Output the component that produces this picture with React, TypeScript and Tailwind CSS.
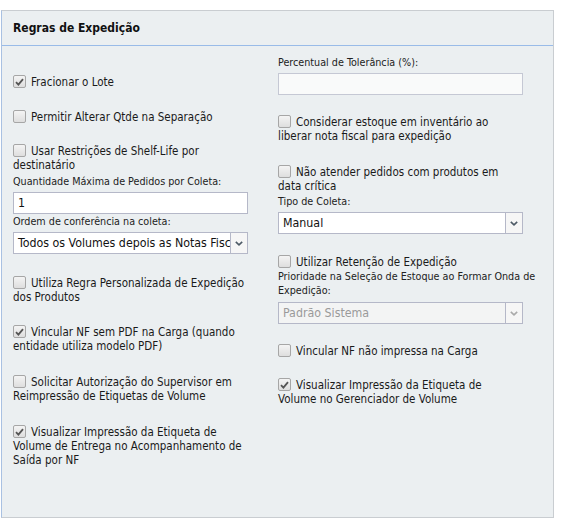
import React from "react";

const font = { fontFamily: '"DejaVu Sans Condensed", "DejaVu Sans", sans-serif' };

function Box({ checked }: { checked?: boolean }) {
  return (
    <span className="absolute left-0 top-0 w-[13px] h-[13px] rounded-[2px] border border-[#a6a6a6] bg-gradient-to-b from-[#f4f4f4] to-[#dedede] flex items-center justify-center">
      {checked && (
        <svg width="9" height="8" viewBox="0 0 9 8">
          <path d="M1 4.2 L3.4 6.6 L8 1.2" stroke="#555" strokeWidth="1.8" fill="none" />
        </svg>
      )}
    </span>
  );
}

function Check({ checked, lines, className }: { checked?: boolean; lines: string[]; className?: string }) {
  return (
    <div className={"relative text-[11.5px] leading-[14px] text-[#1a1a1a] whitespace-nowrap " + (className || "")}>
      <Box checked={checked} />
      {lines.map((l, i) => (
        <div key={i} className={i === 0 ? "pl-[18px]" : ""}>{l}</div>
      ))}
    </div>
  );
}

function Label({ children, className }: { children: React.ReactNode; className?: string }) {
  return <div className={"text-[10.7px] leading-[14px] text-[#222] whitespace-nowrap " + (className || "")}>{children}</div>;
}

function Select({ value, disabled, className }: { value: string; disabled?: boolean; className?: string }) {
  return (
    <div className={"flex h-[22px] border border-[#b5b8c8] " + (disabled ? "bg-[#f3f4f4] text-[#9a9a9a]" : "bg-white text-[#111]") + " " + (className || "")}>
      <div className="flex-1 overflow-hidden whitespace-nowrap text-[12.3px] leading-[20px] pl-[4px]">{value}</div>
      <div className="w-[17px] border-l border-[#b5b8c8] flex items-center justify-center bg-[#f6f6f6]">
        <svg width="8" height="5" viewBox="0 0 8 5">
          <path d="M0.8 0.8 L4 3.8 L7.2 0.8" stroke={disabled ? "#aaa" : "#4d5a66"} strokeWidth="1.6" fill="none" />
        </svg>
      </div>
    </div>
  );
}

export default function App() {
  return (
    <div className="w-[564px] h-[528px] bg-white pt-[10px] pl-[1px]" style={font}>
      <div className="w-[553px] h-[508px] bg-[#ebeff1] border-t border-r border-b border-[#c9cdd1] border-l border-l-[#a9c1e2] flex flex-col">
        <div className="h-[35px] border-b border-[#99bbe8] pl-[11px] flex items-center text-[12px] font-bold text-[#111]">
          Regras de Expedição
        </div>
        <div className="flex pl-[11px]">
          <div className="w-[235px]">
            <Check className="mt-[29px]" checked lines={["Fracionar o Lote"]} />
            <Check className="mt-[21px]" lines={["Permitir Alterar Qtde na Separação"]} />
            <Check className="mt-[20px]" lines={["Usar Restrições de Shelf-Life por", "destinatário"]} />
            <Label className="mt-[3px]">Quantidade Máxima de Pedidos por Coleta:</Label>
            <div className="mt-[3px] h-[22px] border border-[#b5b8c8] bg-white text-[12.3px] leading-[20px] pl-[4px] text-[#111]">1</div>
            <Label className="mt-[1px]">Ordem de conferência na coleta:</Label>
            <Select className="mt-[3px]" value="Todos os Volumes depois as Notas Fiscais" />
            <Check className="mt-[22px]" lines={["Utiliza Regra Personalizada de Expedição", "dos Produtos"]} />
            <Check className="mt-[21px]" checked lines={["Vincular NF sem PDF na Carga (quando", "entidade utiliza modelo PDF)"]} />
            <Check className="mt-[22px]" lines={["Solicitar Autorização do Supervisor em", "Reimpressão de Etiquetas de Volume"]} />
            <Check className="mt-[22px]" checked lines={["Visualizar Impressão da Etiqueta de", "Volume de Entrega no Acompanhamento de", "Saída por NF"]} />
          </div>
          <div className="w-[245px] ml-[30px]">
            <Label className="mt-[10px]">Percentual de Tolerância (%):</Label>
            <div className="mt-[3px] h-[22px] border border-[#c5c8d4] bg-[#f9fafa]" />
            <Check className="mt-[20px]" lines={["Considerar estoque em inventário ao", "liberar nota fiscal para expedição"]} />
            <Check className="mt-[22px]" lines={["Não atender pedidos com produtos em", "data crítica"]} />
            <Label className="mt-[2px]">Tipo de Coleta:</Label>
            <Select className="mt-[3px]" value="Manual" />
            <Check className="mt-[21px]" lines={["Utilizar Retenção de Expedição"]} />
            <Label className="mt-[1px]">Prioridade na Seleção de Estoque ao Formar Onda de</Label>
            <Label>Expedição:</Label>
            <Select className="mt-[4px]" disabled value="Padrão Sistema" />
            <Check className="mt-[20px]" lines={["Vincular NF não impressa na Carga"]} />
            <Check className="mt-[20px]" checked lines={["Visualizar Impressão da Etiqueta de", "Volume no Gerenciador de Volume"]} />
          </div>
        </div>
      </div>
    </div>
  );
}
